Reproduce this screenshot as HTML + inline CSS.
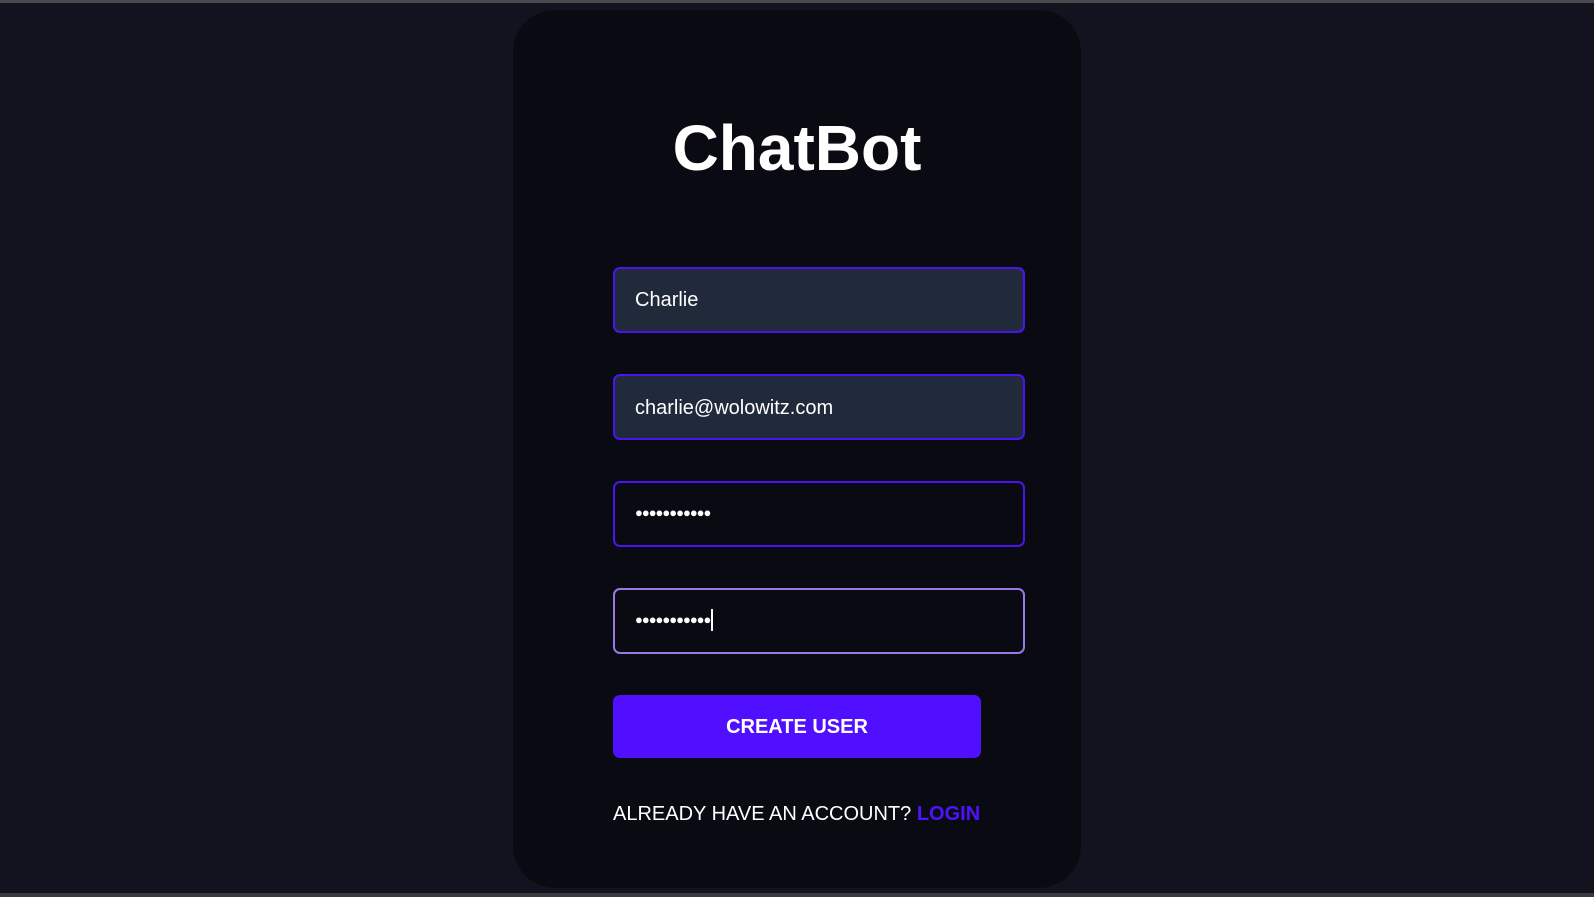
<!DOCTYPE html>
<html><head><style>
html,body{margin:0;padding:0;width:1594px;height:897px;overflow:hidden;background:#13131f;font-family:"Liberation Sans",Arial,sans-serif;}
.top{position:absolute;left:0;top:0;width:1594px;height:3px;background:#4a4a4e;}
.bot{position:absolute;left:0;top:893px;width:1594px;height:4px;background:#3a3a3e;}
.card{position:absolute;left:513px;top:10px;width:568px;height:878px;background:#0a0b12;border-radius:42px;}
h1{position:absolute;left:0;width:568px;top:101px;margin:0;text-align:center;color:#fff;font-size:64px;font-weight:bold;line-height:74px;}
.in{position:absolute;left:100px;border:2px solid #4a14f0;border-radius:7px;color:#fff;font-size:20px;line-height:62px;padding-left:20px;box-sizing:border-box;width:412px;height:66px;}
.f{background:#212a3b;}
.dots{font-size:13px;letter-spacing:-1px;position:relative;top:-3px;}
.btn{position:absolute;left:100px;top:685px;width:368px;height:63px;background:#5010ff;border-radius:7px;color:#fff;font-weight:bold;font-size:20px;text-align:center;line-height:65px;}
.al{position:absolute;left:100px;top:793px;color:#fff;font-size:20px;white-space:nowrap;}
.al b{color:#4f12ff;}
</style></head><body>
<div class="top"></div>
<div class="card">
<h1>ChatBot</h1>
<div class="in f" style="top:257px">Charlie</div>
<div class="in f" style="top:364px;line-height:64px">charlie@wolowitz.com</div>
<div class="in" style="top:471px"><span class="dots">●●●●●●●●●●●</span></div>
<div class="in" style="top:578px;border-color:#9a78e6"><span class="dots">●●●●●●●●●●●</span><span style="display:inline-block;width:2px;height:22px;background:#fff;vertical-align:middle;margin-left:1px;position:relative;top:-2px"></span></div>
<div class="btn">CREATE USER</div>
<div class="al">ALREADY HAVE AN ACCOUNT? <b>LOGIN</b></div>
</div>
<div class="bot"></div>
</body></html>
